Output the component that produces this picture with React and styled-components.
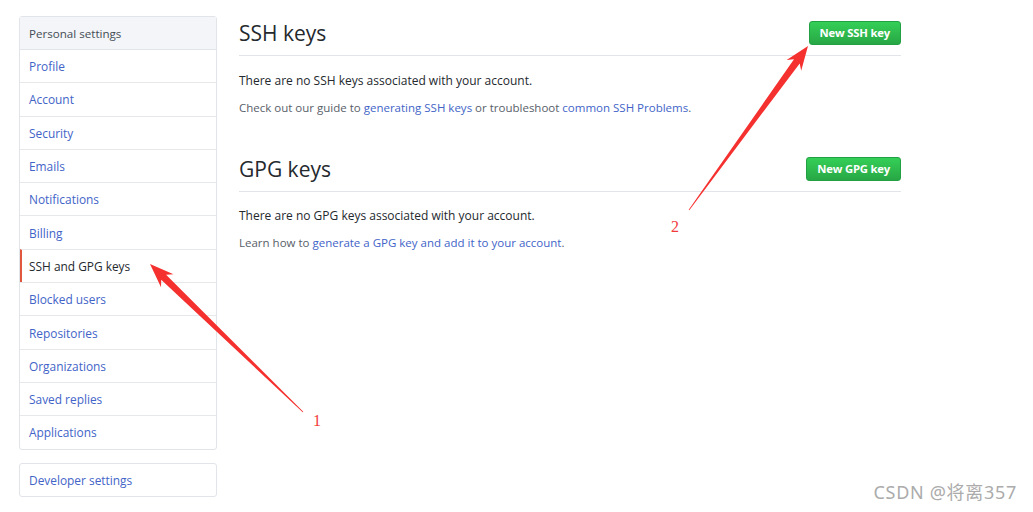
import React from "react";
import styled, { createGlobalStyle } from "styled-components";

const Global = createGlobalStyle`
  html, body { margin: 0; padding: 0; background: #fff; }
  body { font-family: "Open Sans", "Noto Sans", Arial, sans-serif; color: #24292e; }
`;

const Page = styled.div`
  position: relative;
  width: 1033px;
  height: 512px;
  overflow: hidden;
  display: flex;
  align-items: flex-start;
  gap: 22px;
  padding: 16px 0 0 19px;
  box-sizing: border-box;
`;

const Sidebar = styled.nav`
  width: 198px;
  display: flex;
  flex-direction: column;
  gap: 13px;
`;

const Menu = styled.div`
  border: 1px solid #e1e4e8;
  border-radius: 3px;
  background: #fff;
  display: flex;
  flex-direction: column;
`;

const MenuHeader = styled.div`
  height: 32px;
  display: flex;
  align-items: center;
  padding-left: 9px;
  background: #f3f5f8;
  border-bottom: 1px solid #e1e4e8;
  font-size: 11.6px;
  color: #444d56;
  font-weight: 400;
`;

const MenuItem = styled.a`
  height: 32.3px;
  display: flex;
  align-items: center;
  padding-left: ${(p) => (p.$selected ? "7px" : "9px")};
  border-left: ${(p) => (p.$selected ? "2px solid #e0573f" : "0")};
  border-top: ${(p) => (p.$first ? "0" : "1px solid #e6e8eb")};
  font-size: 11.9px;
  color: ${(p) => (p.$selected ? "#24292e" : "#4264c8")};
  text-decoration: none;
`;

const Main = styled.main`
  width: 662px;
  display: flex;
  flex-direction: column;
`;

const Section = styled.section`
  display: flex;
  flex-direction: column;
  margin-bottom: ${(p) => p.$gap || "0"};
`;

const SectionHead = styled.div`
  display: flex;
  align-items: center;
  justify-content: space-between;
  padding: 5px 0 10px;
  border-bottom: 1px solid #e1e4e8;
`;

const Title = styled.h2`
  margin: 0;
  font-size: 21px;
  font-weight: 400;
  color: #24292e;
  line-height: 24px;
`;

const GreenButton = styled.button`
  height: 24px;
  margin-top: -1px;
  padding: 0 10px;
  border: 1px solid #23a042;
  border-radius: 3px;
  background: linear-gradient(#34cf57, #28a745);
  color: #fff;
  font-family: "Open Sans", "Noto Sans", Arial, sans-serif;
  font-weight: 700;
  font-size: 11.3px;
  letter-spacing: -0.2px;
  cursor: pointer;
`;

const Blurb = styled.p`
  margin: ${(p) => p.$m || "0"};
  font-size: ${(p) => p.$size || "12px"};
  color: ${(p) => (p.$muted ? "#586069" : "#24292e")};
  line-height: 15px;
`;

const Link = styled.a`
  color: #4264c8;
  text-decoration: none;
`;

const Overlay = styled.svg`
  position: absolute;
  left: 0;
  top: 0;
  pointer-events: none;
`;

const Watermark = styled.div`
  position: absolute;
  right: 16px;
  bottom: 8px;
  font-family: "Noto Sans", "Noto Sans CJK SC", sans-serif;
  font-size: 18px;
  letter-spacing: 0.7px;
  color: #ababab;
`;

function arrowPoints(tail, tip, headLen = 24, headW = 9, shaftW = 3.5, tailW = 0.4) {
  const dx = tip[0] - tail[0];
  const dy = tip[1] - tail[1];
  const len = Math.hypot(dx, dy);
  const ux = dx / len, uy = dy / len;
  const nx = -uy, ny = ux;
  const base = [tip[0] - ux * headLen, tip[1] - uy * headLen];
  const notch = [tip[0] - ux * (headLen - 5), tip[1] - uy * (headLen - 5)];
  const pts = [
    [tail[0] + nx * tailW, tail[1] + ny * tailW],
    [notch[0] + nx * shaftW, notch[1] + ny * shaftW],
    [base[0] + nx * headW, base[1] + ny * headW],
    tip,
    [base[0] - nx * headW, base[1] - ny * headW],
    [notch[0] - nx * shaftW, notch[1] - ny * shaftW],
    [tail[0] - nx * tailW, tail[1] - ny * tailW],
  ];
  return pts.map((p) => p.map((v) => v.toFixed(1)).join(",")).join(" ");
}

const items = [
  "Profile",
  "Account",
  "Security",
  "Emails",
  "Notifications",
  "Billing",
  "SSH and GPG keys",
  "Blocked users",
  "Repositories",
  "Organizations",
  "Saved replies",
  "Applications",
];

export default function App() {
  return (
    <>
      <Global />
      <Page>
        <Sidebar>
          <Menu>
            <MenuHeader>Personal settings</MenuHeader>
            {items.map((t, i) => (
              <MenuItem key={t} $first={i === 0} $selected={t === "SSH and GPG keys"}>
                {t}
              </MenuItem>
            ))}
          </Menu>
          <Menu>
            <MenuItem $first>Developer settings</MenuItem>
          </Menu>
        </Sidebar>
        <Main>
          <Section $gap="37px">
            <SectionHead>
              <Title>SSH keys</Title>
              <GreenButton>New SSH key</GreenButton>
            </SectionHead>
            <Blurb $m="17px 0 0 0">There are no SSH keys associated with your account.</Blurb>
            <Blurb $m="12px 0 0 0" $size="11.5px" $muted>
              Check out our guide to <Link>generating SSH keys</Link> or troubleshoot{" "}
              <Link>common SSH Problems</Link>.
            </Blurb>
          </Section>
          <Section>
            <SectionHead>
              <Title>GPG keys</Title>
              <GreenButton>New GPG key</GreenButton>
            </SectionHead>
            <Blurb $m="16px 0 0 0">There are no GPG keys associated with your account.</Blurb>
            <Blurb $m="12px 0 0 0" $size="11.5px" $muted>
              Learn how to <Link>generate a GPG key and add it to your account</Link>.
            </Blurb>
          </Section>
        </Main>
        <Overlay width="1033" height="512" viewBox="0 0 1033 512">
          <polygon points={arrowPoints([303, 412], [150, 264])} fill="#f5312f" />
          <polygon points={arrowPoints([689, 210], [808, 46])} fill="#f5312f" />
          <text x="313" y="426" fontFamily="Liberation Serif, serif" fontSize="16" fill="#f23b3b">1</text>
          <text x="671" y="232" fontFamily="Liberation Serif, serif" fontSize="16" fill="#f23b3b">2</text>
        </Overlay>
        <Watermark>CSDN @将离357</Watermark>
      </Page>
    </>
  );
}
